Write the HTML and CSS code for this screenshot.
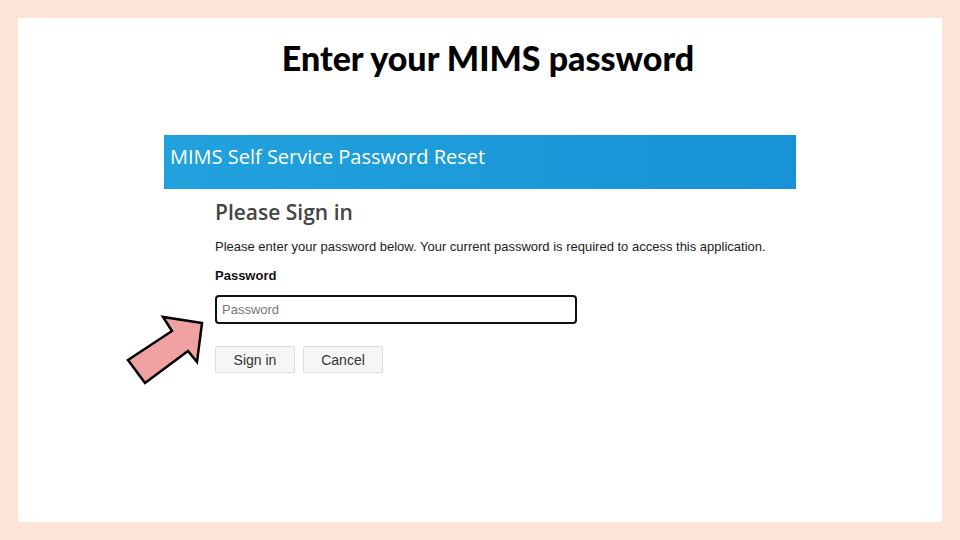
FILE: index.html
```html
<!DOCTYPE html>
<html>
<head>
<meta charset="utf-8">
<link rel="stylesheet" href="styles.css">
</head>
<body>
<div class="frame">
  <div class="slide">
    <h1 class="title">Enter your MIMS password</h1>
    <div class="app">
      <div class="banner">MIMS Self Service Password Reset</div>
      <div class="form">
        <h2 class="heading">Please Sign in</h2>
        <p class="intro">Please enter your password below. Your current password is required to access this application.</p>
        <label class="label">Password</label>
        <div class="field">
          <input class="input" type="text" placeholder="Password">
          <svg class="arrow" width="90" height="80" viewBox="120 310 90 80">
            <polygon points="202,325 163,319 172,333 128,362 145,385 188,353 197,364" fill="#f0a1a1" stroke="#000" stroke-width="2.5" stroke-linejoin="miter"/>
          </svg>
        </div>
        <div class="actions">
          <button class="btn">Sign in</button>
          <button class="btn">Cancel</button>
        </div>
      </div>
    </div>
  </div>
</div>
</body>
</html>
```
FILE: styles.css
```css
html, body {
  margin: 0;
  padding: 0;
}
body {
  background: #fde4d6;
  width: 960px;
  height: 540px;
  overflow: hidden;
}
.frame {
  padding: 18px;
  height: 540px;
  box-sizing: border-box;
}
.slide {
  background: #fff;
  height: 504px;
  display: flex;
  flex-direction: column;
  align-items: center;
}
.title {
  margin: 19px 0 0;
  padding-left: 16px;
  font-family: "Lato", sans-serif;
  font-weight: 900;
  font-size: 34px;
  line-height: 42px;
  color: #000;
}
.app {
  margin-top: 56px;
  width: 632px;
}
.banner {
  height: 54px;
  background: linear-gradient(90deg, #21a2dd, #1792d6);
  color: #fff;
  font-family: "Open Sans", sans-serif;
  font-size: 20px;
  line-height: 44px;
  padding-left: 6px;
  box-sizing: border-box;
}
.form {
  padding-left: 51px;
}
.heading {
  margin: 9px 0 0;
  font-family: "Open Sans", sans-serif;
  font-weight: 600;
  font-size: 21px;
  line-height: 28px;
  color: #444;
}
.intro {
  margin: 13px 0 0;
  font-family: "Liberation Sans", Arial, sans-serif;
  font-size: 13px;
  line-height: 16px;
  color: #222;
}
.label {
  display: block;
  margin-top: 12px;
  font-family: "Liberation Sans", Arial, sans-serif;
  font-weight: bold;
  font-size: 13px;
  line-height: 18px;
  color: #111;
}
.field {
  position: relative;
  margin-top: 10px;
}
.input {
  display: block;
  width: 362px;
  height: 29px;
  box-sizing: border-box;
  border: 2px solid #111;
  border-radius: 4px;
  padding: 0 5px;
  font-family: "Liberation Sans", Arial, sans-serif;
  font-size: 13px;
  color: #333;
  outline: none;
}
.input::placeholder {
  color: #777;
}
.arrow {
  position: absolute;
  left: -95px;
  top: 13px;
}
.actions {
  display: flex;
  gap: 8px;
  margin-top: 22px;
}
.btn {
  width: 80px;
  height: 27px;
  background: #f5f6f7;
  border: 1px solid #dcdfe2;
  border-radius: 2px;
  font-family: "Liberation Sans", Arial, sans-serif;
  font-size: 14px;
  color: #333;
  padding: 0;
}
```
